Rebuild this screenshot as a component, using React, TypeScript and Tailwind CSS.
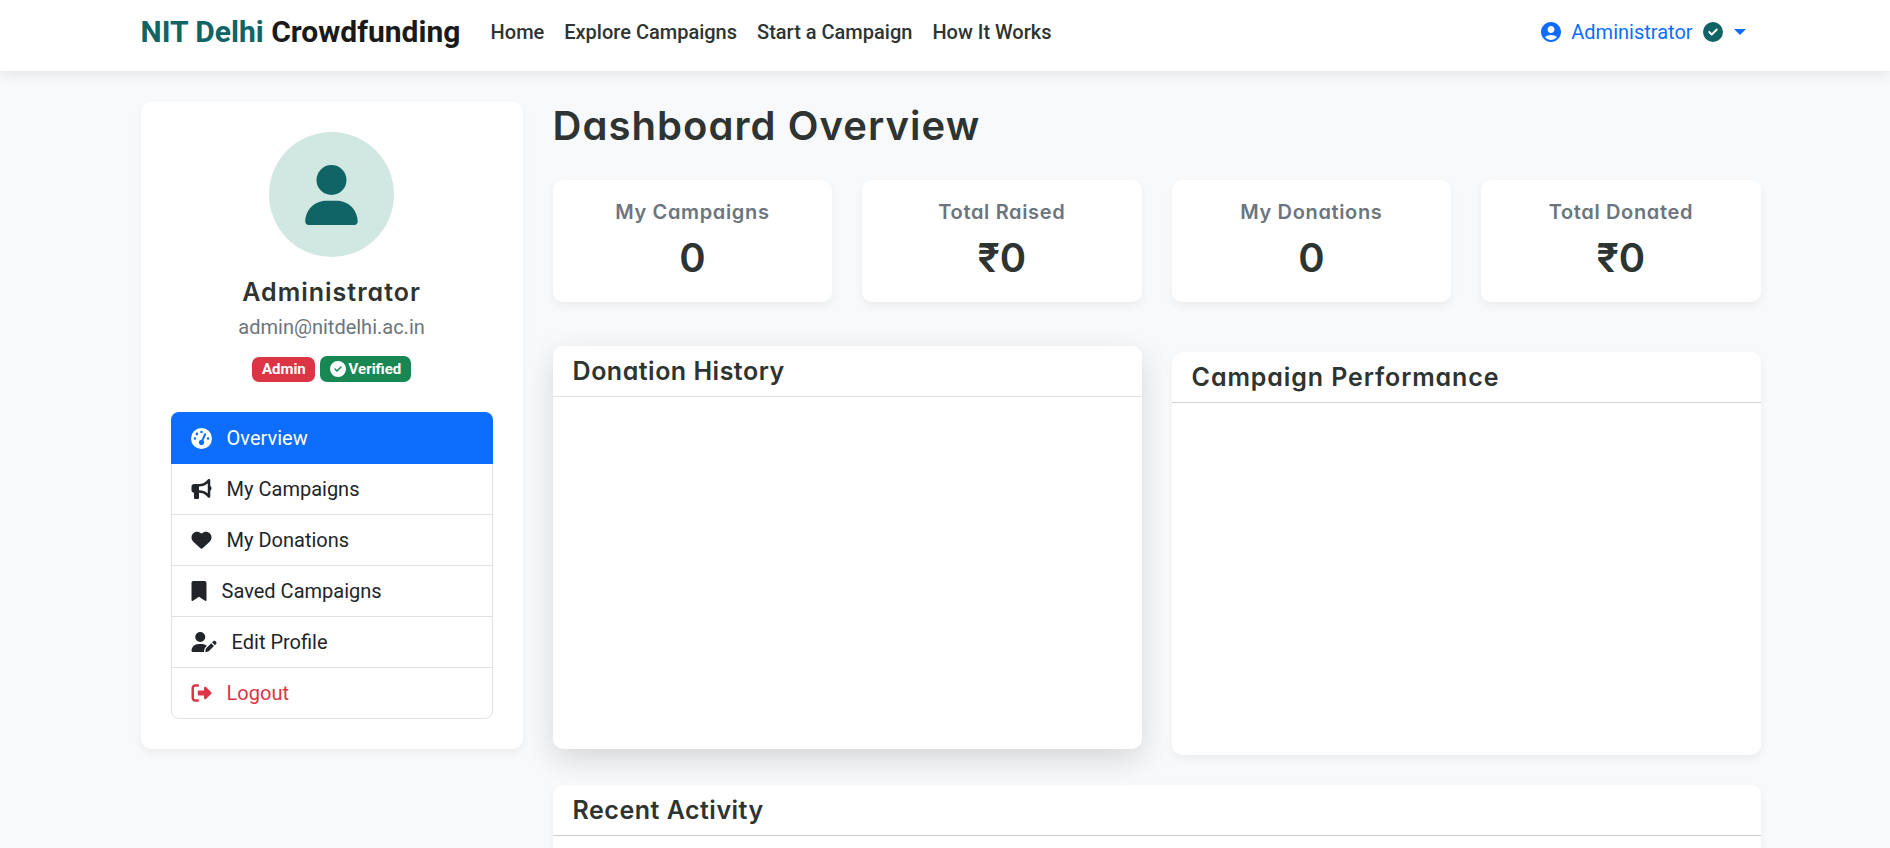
import { FaUser, FaBullhorn, FaHeart, FaBookmark, FaUserPen, FaGaugeHigh, FaCircleCheck, FaRightFromBracket } from "react-icons/fa6";
import { MdAccountCircle } from "react-icons/md";
import type { ReactNode } from "react";

const heading = "font-['Inter',sans-serif] font-semibold text-[#2d3432] [font-feature-settings:'cv11','ss03']";

const menu: { label: string; icon: ReactNode }[] = [
  { label: "My Campaigns", icon: <FaBullhorn className="w-[21px] h-5" /> },
  { label: "My Donations", icon: <FaHeart className="w-[21px] h-5" /> },
  { label: "Saved Campaigns", icon: <FaBookmark className="w-4 h-5" /> },
  { label: "Edit Profile", icon: <FaUserPen className="w-[26px] h-5" /> },
];

const stats = [
  { label: "My Campaigns", value: "0" },
  { label: "Total Raised", value: "₹0" },
  { label: "My Donations", value: "0" },
  { label: "Total Donated", value: "₹0" },
];

function Navbar() {
  return (
    <header className="h-[71px] shrink-0 bg-white shadow-[0_2px_15px_rgba(0,0,0,0.1)] relative">
      <div className="ml-[140.6px] w-[1620px] h-16 flex items-center">
        <a className="text-[30px] font-bold text-[#1a1a1a] whitespace-nowrap w-[350px]">
          <span className="text-[#116466]">NIT Delhi</span> Crowdfunding
        </a>
        <nav className="flex gap-5 font-medium text-[#2d3432]">
          <a>Home</a>
          <a>Explore Campaigns</a>
          <a>Start a Campaign</a>
          <a>How It Works</a>
        </nav>
        <div className="ml-auto mr-[15px] flex items-center text-[#0d6efd]">
          <MdAccountCircle className="size-6 mr-2" />
          <span>Administrator</span>
          <FaCircleCheck className="size-5 ml-2.5 text-[#116466]" />
          <span className="ml-[11px] border-x-6 border-t-6 border-x-transparent border-t-[#0d6efd]" />
        </div>
      </div>
    </header>
  );
}

function Sidebar() {
  return (
    <aside className="w-[382px] h-[647px] bg-white rounded-[10px] p-[30px] shadow-[0_4px_8px_rgba(0,0,0,0.05)] flex flex-col items-center">
      <div className="size-[125px] shrink-0 rounded-full bg-[#d1e8e2] flex items-center justify-center text-[#116466]">
        <FaUser className="w-[53px] h-[60px]" />
      </div>
      <h5 className={`${heading} text-[25px] leading-[30px] mt-5 tracking-[1px]`}>Administrator</h5>
      <p className="text-[#6c757d] mt-[5px]">admin@nitdelhi.ac.in</p>
      <div className="flex items-end gap-[5px] mt-[13px] h-[27px] text-[15px] leading-[15px] font-bold text-white">
        <span className="bg-[#dc3545] rounded-[7px] h-[25px] px-[9.4px] pt-[5px]">Admin</span>
        <span className="bg-[#198754] rounded-[7px] h-[26px] px-[9.4px] flex items-center">
          <FaCircleCheck className="size-4 mr-[3px]" />Verified
        </span>
      </div>
      <ul className="mt-[30px] w-[322px] h-[307px] rounded-[8px] border border-[#dee2e6] text-[#212529]">
        <li className="-mt-px -mx-px h-[52px] rounded-t-[8px] bg-[#0d6efd] text-white flex items-center px-5 gap-[15px]">
          <FaGaugeHigh className="size-[21px]" />Overview
        </li>
        {menu.map((m) => (
          <li key={m.label} className="h-[51px] border-b border-[#dee2e6] flex items-center px-[19px] gap-[15px]">
            {m.icon}{m.label}
          </li>
        ))}
        <li className="h-[50px] flex items-center px-[19px] gap-[15px] text-[#dc3545]">
          <FaRightFromBracket className="w-[21px] h-5" />Logout
        </li>
      </ul>
    </aside>
  );
}

function Panel({ title, spacing, raised }: { title: string; spacing: string; raised?: boolean }) {
  return (
    <section
      className={
        raised
          ? "h-[403px] rounded-[10px] bg-white shadow-[0_10px_30px_rgba(0,0,0,0.14)]"
          : "h-[403px] mt-1.5 rounded-[10px] bg-white shadow-[0_4px_8px_rgba(0,0,0,0.05)]"
      }
    >
      <h5
        className={`${heading} ${spacing} text-[25px] leading-[30px] h-[51px] px-5 pt-[10px] border-b ${raised ? "border-[#e0e2e4]" : "border-[#cfcfcf]"}`}
      >
        {title}
      </h5>
    </section>
  );
}

export default function App() {
  return (
    <div className="h-[848px] overflow-hidden bg-[#f8f9fa] font-['Roboto',sans-serif] text-[20px] leading-[30px] flex flex-col">
      <Navbar />
      <main className="ml-[140.6px] w-[1620px] mt-[31px] flex gap-[30px]">
        <Sidebar />
        <div className="flex-1">
          <h2 className={`${heading} text-[40px] leading-[48px] tracking-[1.05px]`}>Dashboard Overview</h2>
          <div className="mt-[30px] grid grid-cols-4 gap-[30px]">
            {stats.map((s) => (
              <div key={s.label} className="h-[122px] rounded-[10px] bg-white shadow-[0_4px_8px_rgba(0,0,0,0.05)] text-center pt-5">
                <h6 className="font-['Inter',sans-serif] font-semibold text-[#6c757d] leading-6 tracking-[0.65px] [font-feature-settings:'cv11','ss03']">{s.label}</h6>
                <p className={`${heading} text-[40px] leading-[48px] mt-[10px]`}>{s.value}</p>
              </div>
            ))}
          </div>
          <div className="mt-11 grid grid-cols-2 gap-[30px]">
            <Panel title="Donation History" spacing="tracking-[0.5px]" raised />
            <Panel title="Campaign Performance" spacing="tracking-[0.9px]" />
          </div>
          <div className="mt-[30px]">
            <Panel title="Recent Activity" spacing="tracking-[0.5px]" />
          </div>
        </div>
      </main>
    </div>
  );
}
